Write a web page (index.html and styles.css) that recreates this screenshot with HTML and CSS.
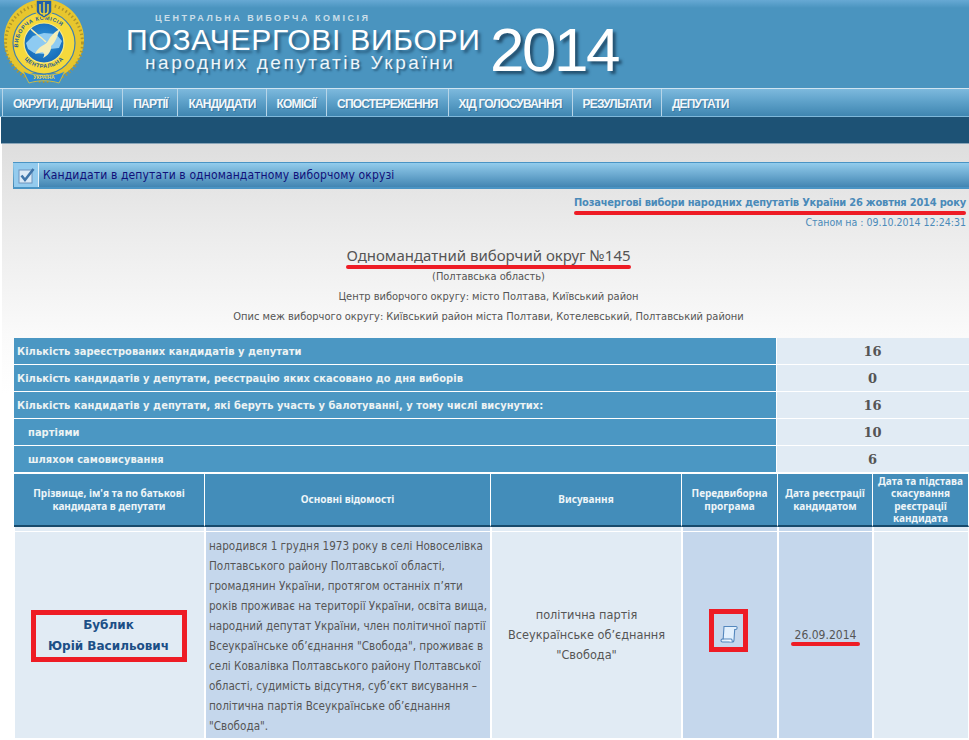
FILE: index.html
```html
<!DOCTYPE html>
<html lang="uk">
<head>
<meta charset="utf-8">
<title>Позачергові вибори народних депутатів України 2014</title>
<link rel="stylesheet" href="styles.css">
</head>
<body>
<header class="banner">
  <svg class="seal" width="88" height="88" viewBox="0 0 88 88">
    <defs>
      <path id="arcTop" d="M19 53 A26 26 0 1 1 69 53"/>
      <path id="arcBot" d="M20 52 A26 26 0 0 0 68 52"/>
      <radialGradient id="disc" cx="50%" cy="45%" r="60%">
        <stop offset="0" stop-color="#2f96dc"/>
        <stop offset="1" stop-color="#1567b4"/>
      </radialGradient>
    </defs>
    <path d="M26 75 A40 40 0 1 1 62 75 L44 70 Z" fill="#e7c62e"/>
    <circle cx="44" cy="43" r="38.5" fill="none" stroke="#b0962c" stroke-width="3" stroke-dasharray="1.5 2.5"/>
    <circle cx="44" cy="43" r="31" fill="#f5d93c" stroke="#3f7fb0" stroke-width="1.2"/>
    <circle cx="44" cy="43" r="20" fill="url(#disc)" stroke="#fbeb86" stroke-width="1.2"/>
    <path d="M26 43 L33 36 L44 33 L56 34 L62 41 L59 48 L50 49 L45 54 L34 53 L28 49 Z" fill="#8ecbf2"/>
    <path d="M35 54 C39 45 45 46 48 41 C50 37 54 32 60 29 C57 36 56 42 51 46 C52 50 48 56 43 58 C46 53 43 51 39 53 Z" fill="#f4eeb8"/>
    <path d="M31 29 C36 34 42 38 46 42" fill="none" stroke="#f4eeb8" stroke-width="1.5"/>
    <text class="seal-text"><textPath href="#arcTop" startOffset="6%">ВИБОРЧА  КОМІСІЯ</textPath></text>
    <text class="seal-text"><textPath href="#arcBot" startOffset="14%">ЦЕНТРАЛЬНА</textPath></text>
    <path d="M36 0 H52 V11 C52 15 47 16 44 18.5 C41 16 36 15 36 11 Z" fill="#1f5fa8" stroke="#e7c62e" stroke-width="1.5"/>
    <path d="M44 2 V16 M40 4 V11 C40 13 42 14 44 14 M48 4 V11 C48 13 46 14 44 14" fill="none" stroke="#f5d93c" stroke-width="1.4"/>
    <path d="M23 71 C34 77 54 77 65 71 L59 83 C50 80 38 80 29 83 Z" fill="#2d8ad6" stroke="#e7c62e" stroke-width=".8"/>
    <text class="seal-ua" x="44" y="78.5" text-anchor="middle">УКРАЇНА</text>
  </svg>
  <div class="brand">
    <div class="brand-small">ЦЕНТРАЛЬНА ВИБОРЧА КОМІСІЯ</div>
    <div class="brand-row">
      <div class="brand-titles">
        <div class="brand-main">ПОЗАЧЕРГОВІ ВИБОРИ</div>
        <div class="brand-sub">народних депутатів України</div>
      </div>
      <div class="brand-year">2014</div>
    </div>
  </div>
</header>
<nav class="menu">
  <a class="menu-item">ОКРУГИ, ДІЛЬНИЦІ</a>
  <a class="menu-item">ПАРТІЇ</a>
  <a class="menu-item">КАНДИДАТИ</a>
  <a class="menu-item">КОМІСІЇ</a>
  <a class="menu-item">СПОСТЕРЕЖЕННЯ</a>
  <a class="menu-item">ХІД ГОЛОСУВАННЯ</a>
  <a class="menu-item">РЕЗУЛЬТАТИ</a>
  <a class="menu-item">ДЕПУТАТИ</a>
</nav>
<div class="darkbar"></div>
<main class="page">
  <div class="titlebar">
    <span class="titlebar-icon">
      <svg width="17" height="17" viewBox="0 0 17 17">
        <rect x="1" y="3" width="13" height="13" fill="#dbe9f6" stroke="#6d94bd"/>
        <path d="M3.5 8.5 L7 13 L15.5 2" fill="none" stroke="#3f74a9" stroke-width="2.6"/>
      </svg>
    </span>
    <span class="titlebar-text">Кандидати в депутати в одномандатному виборчому окрузі</span>
  </div>
  <div class="election"><span class="marked">Позачергові вибори народних депутатів України 26 жовтня 2014 року</span></div>
  <div class="stamp">Станом на : 09.10.2014 12:24:31</div>
  <div class="district">
    <h1 class="district-title"><span class="marked">Одномандатний виборчий округ №145</span></h1>
    <p class="district-line district-region">(Полтавська область)</p>
    <p class="district-line">Центр виборчого округу: місто Полтава, Київський район</p>
    <p class="district-line">Опис меж виборчого округу: Київський район міста Полтави, Котелевський, Полтавський райони</p>
  </div>
  <table class="stats">
    <tr><th>Кількість зареєстрованих кандидатів у депутати</th><td>16</td></tr>
    <tr><th>Кількість кандидатів у депутати, реєстрацію яких скасовано до дня виборів</th><td>0</td></tr>
    <tr><th>Кількість кандидатів у депутати, які беруть участь у балотуванні, у тому числі висунутих:</th><td>16</td></tr>
    <tr><th class="indent">партіями</th><td>10</td></tr>
    <tr><th class="indent">шляхом самовисування</th><td>6</td></tr>
  </table>
  <table class="candidates">
    <colgroup>
      <col class="c1"><col class="c2"><col class="c3"><col class="c4"><col class="c5"><col class="c6">
    </colgroup>
    <thead>
      <tr>
        <th>Прізвище, ім'я та по батькові<br>кандидата в депутати</th>
        <th>Основні відомості</th>
        <th>Висування</th>
        <th>Передвиборна<br>програма</th>
        <th>Дата реєстрації<br>кандидатом</th>
        <th>Дата та підстава<br>скасування<br>реєстрації<br>кандидата</th>
      </tr>
    </thead>
    <tbody>
      <tr class="spacer"><td></td><td class="tint"></td><td></td><td class="tint"></td><td class="tint"></td><td></td></tr>
      <tr>
        <td class="name"><span class="redbox name-box">Бублик<br>Юрій Васильович</span></td>
        <td class="tint bio">народився 1 грудня 1973 року в селі Новоселівка Полтавського району Полтавської області, громадянин України, протягом останніх п’яти років проживає на території України, освіта вища, народний депутат України, член політичної партії Всеукраїнське об’єднання "Свобода", проживає в селі Ковалівка Полтавського району Полтавської області, судимість відсутня, суб’єкт висування – політична партія Всеукраїнське об’єднання "Свобода".</td>
        <td class="party">політична партія<br>Всеукраїнське об’єднання<br>"Свобода"</td>
        <td class="tint center">
          <span class="redbox icon-box">
            <svg width="18" height="18" viewBox="0 0 18 18">
              <path d="M4 1.5 H16 C17.6 1.5 17.6 4.5 15.5 4.5 L14.7 4.5 L14 15 C14 17 13 17 12 17 H2.5 C0.5 17 0.5 14 2.5 14 H3.2 Z" fill="#e2f0fd" stroke="#5487bd" stroke-width="1.1"/>
              <path d="M2.5 14 H11 C12 14 12.4 15.5 12 17" fill="#f7fbff" stroke="#5487bd" stroke-width="1.1"/>
            </svg>
          </span>
        </td>
        <td class="tint center date"><span class="marked marked-date">26.09.2014</span></td>
        <td></td>
      </tr>
    </tbody>
  </table>
</main>
</body>
</html>
```
FILE: styles.css
```css
html, body { margin: 0; padding: 0; }
body {
  font-family: "DejaVu Sans Condensed", "DejaVu Sans", sans-serif;
  font-size: 11px;
  color: #555;
  background: #fff;
  height: 740px;
  overflow: hidden;
}
.banner {
  height: 88px;
  box-sizing: border-box;
  background: linear-gradient(#67a9d4 0, #4a94bf 8px, #4a94bf 100%);
  display: flex;
  align-items: flex-start;
  overflow: hidden;
}
.seal { flex: none; }
.seal-text { font: bold 5.5px "Liberation Sans", sans-serif; fill: #1e5c99; letter-spacing: 0.6px; }
.seal-ua { font: bold 5px "Liberation Sans", sans-serif; fill: #f5d93c; }
.brand { margin-left: 38px; padding-top: 13px; color: #fff; }
.brand-small {
  margin-left: 29px;
  font: bold 9px/11px "Liberation Sans", sans-serif;
  letter-spacing: 2.5px;
  color: #d9e6ee;
  opacity: .9;
}
.brand-row { display: flex; align-items: flex-start; }
.brand-titles { width: 364px; }
.brand-main {
  margin-top: 2px;
  font: 30px/27px "Liberation Sans", sans-serif;
  letter-spacing: .75px;
  white-space: nowrap;
  text-shadow: 3px 3px 3px #2a5f82;
}
.brand-sub {
  margin-left: 19px;
  font: 19px/20px "Liberation Sans", sans-serif;
  letter-spacing: 2.55px;
  white-space: nowrap;
  color: #eef5f9;
  text-shadow: 2px 2px 2px #2a5f82;
}
.brand-year {
  font: 62px/62px "Liberation Sans", sans-serif;
  letter-spacing: -2.5px;
  margin-top: -5px;
  text-shadow: 3px 3px 3px #23506f;
}
.menu {
  height: 29px;
  box-sizing: border-box;
  border-top: 1px solid #cfe4f1;
  border-bottom: 1px solid #7fb8da;
  padding-left: 2px;
  display: flex;
  background: linear-gradient(#7db9dd 0, #5fa2ca 45%, #3f86b1 100%);
}
.menu-item {
  display: block;
  height: 20px;
  padding: 7px 10px 0 10px;
  box-sizing: content-box;
  border-left: 1px solid #b7d5e8;
  font: bold 12px/16px "Liberation Sans", sans-serif;
  letter-spacing: -.82px;
  color: #f2f7fa;
  text-shadow: 1px 1px 0 #3a7aa3;
  white-space: nowrap;
}
.darkbar {
  height: 26px;
  background: #1d5275;
  border-bottom: 1px solid #8aa5b8;
  margin-left: 1px;
}
.page {
  height: 596px;
  box-sizing: border-box;
  margin-left: 2px;
  padding: 18px 0 0 11px;
  background: linear-gradient(#dedede 0, #ececec 90px, #fafafa 190px, #fff 250px);
}
.titlebar {
  height: 27px;
  box-sizing: border-box;
  border-top: 1px solid #4a94c4;
  border-bottom: 2px solid #4a94c4;
  background: linear-gradient(#93ccec 0, #4285b2 100%);
  display: flex;
  align-items: stretch;
}
.titlebar-icon {
  width: 24px;
  margin-left: 1px;
  flex: none;
  background: #94cbee;
  border-right: 1px solid #e7f1f8;
  display: flex;
  align-items: center;
  justify-content: center;
}
.titlebar-text {
  padding-left: 4px;
  font: 12px/24px "DejaVu Sans Condensed", sans-serif;
  letter-spacing: .13px;
  color: #10107a;
}
.election {
  text-align: right;
  padding: 5px 3px 0 0;
  font: bold 11px/17px "DejaVu Sans Condensed", sans-serif;
  letter-spacing: -.2px;
  color: #4a8ab9;
  white-space: nowrap;
}
.stamp {
  text-align: right;
  padding-right: 3px;
  font-size: 10.5px;
  line-height: 17px;
  margin-top: 3px;
  color: #4a8ab9;
}
.marked { position: relative; display: inline-block; }
.marked::after {
  content: "";
  position: absolute;
  left: 0;
  right: 0;
  bottom: -4px;
  height: 4px;
  border-radius: 2px;
  background: #ee1c25;
}
.district { text-align: center; padding: 14px 5px 0 0; }
.district-title {
  margin: 0;
  font: 400 15px/20px "Noto Sans", sans-serif;
  color: #555;
}
.district-line { margin: 0; line-height: 20px; letter-spacing: -.02px; color: #555; }
.district-region { line-height: 19px; margin-top: 2px; margin-bottom: 1px; }
.stats, .candidates {
  border-collapse: separate;
  border-spacing: 0;
  table-layout: fixed;
  width: 955px;
  margin-left: 1px;
}
.stats { margin-top: 11px; }
.stats th {
  width: 763px;
  height: 27px;
  box-sizing: border-box;
  padding: 1px 0 0 3px;
  text-align: left;
  background: #4b97c3;
  color: #edf3f3;
  font: bold 11px/25px "DejaVu Sans Condensed", sans-serif;
  letter-spacing: .05px;
  border-bottom: 1px solid #fff;
  border-right: 1px solid #fff;
  white-space: nowrap;
}
.stats th.indent { padding-left: 14px; }
.stats td {
  padding: 1px 1px 0 0;
  background: #e1ebf4;
  border-bottom: 1px solid #fff;
  text-align: center;
  font: bold 13px/25px "DejaVu Serif", serif;
  color: #555;
}
.candidates { margin-top: 1px; }
.c1 { width: 191px; }
.c2 { width: 286px; }
.c3 { width: 191px; }
.c4 { width: 96px; }
.c5 { width: 95px; }
.c6 { width: 96px; }
.candidates th {
  height: 53px;
  padding: 0;
  box-sizing: border-box;
  background: #438dba;
  color: #eef5f8;
  font-family: "Noto Sans", sans-serif;
  font-weight: 700;
  font-size: 10px;
  line-height: 12.5px;
  text-align: center;
  border-right: 1px solid #fff;
  border-bottom: 2px solid #174a6c;
}
.candidates td {
  padding: 0;
  background: #e1ebf4;
  border-right: 1px solid #fff;
  border-left: 1px solid #fff;
  border-bottom: 1px solid #fff;
  vertical-align: middle;
}
.candidates td.tint { background: #c5d7ec; }
.spacer td { height: 4px; }
.name, .party, .center { text-align: center; }
.name { font: bold 12px/20px "DejaVu Sans", sans-serif; color: #1c4f86; }
.redbox { display: inline-block; vertical-align: middle; border: 5px solid #ee1c25; box-sizing: border-box; }
.name-box { width: 156px; height: 52px; line-height: 21px; margin: 1px 2px 0 0; }
.candidates .bio {
  padding: 3px 0 2px 3px;
  height: 207px;
  box-sizing: border-box;
  font-size: 11.6px;
  line-height: 20px;
}
.candidates .party { font-size: 12.6px; line-height: 20px; padding: 0 8px 0 8px; }
.icon-box { width: 39px; height: 43px; padding-top: 11px; margin: 0 3px 10px 0; }
.icon-box svg { display: block; margin: 0 auto; }
.date { font-size: 12px; }
.marked-date { padding: 0 4px; line-height: 14px; }
```
